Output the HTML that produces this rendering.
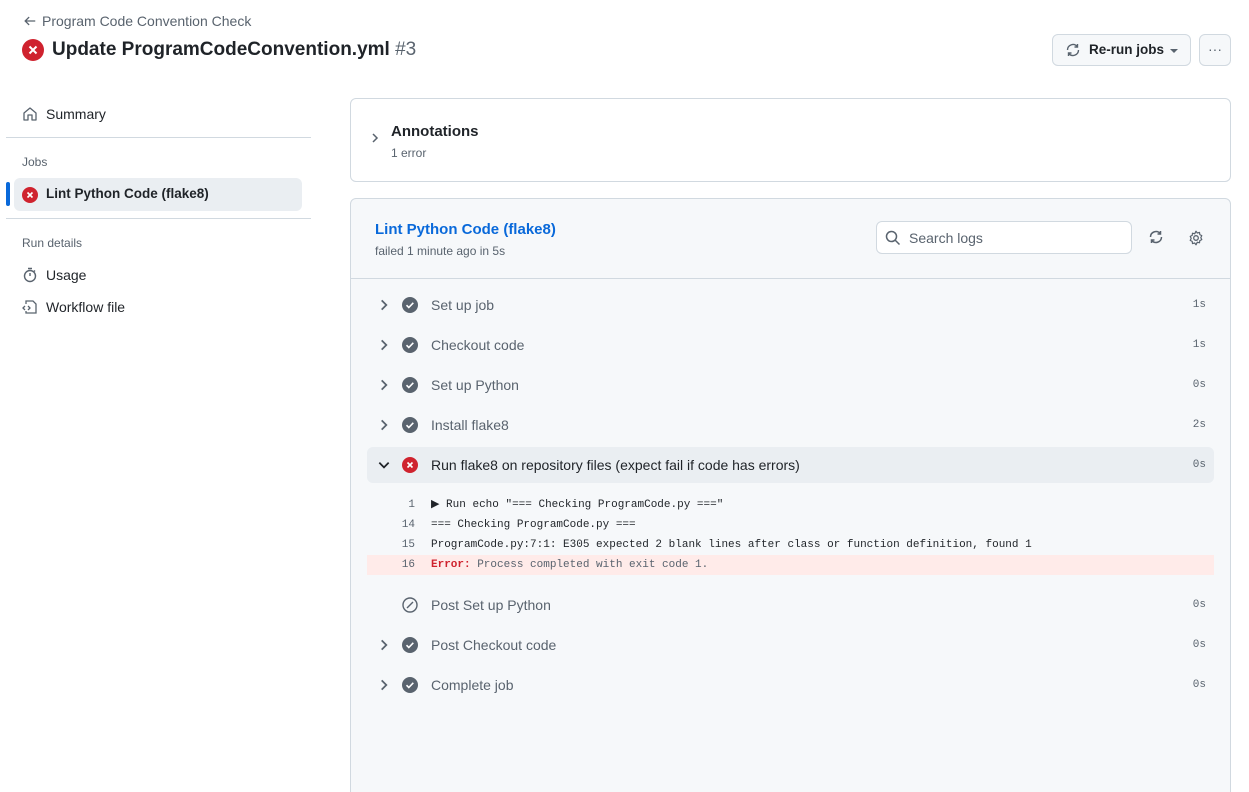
<!DOCTYPE html>
<html><head><meta charset="utf-8"><style>
*{box-sizing:border-box;margin:0;padding:0}
html,body{width:1249px;height:792px;overflow:hidden}
body{background:#fff;font-family:"Liberation Sans",sans-serif;color:#1f2328;position:relative}
.a{position:absolute}
.t{font-size:14px}
.row{position:absolute;left:367px;width:847px;height:36px}
.row .chev{position:absolute;left:10px;top:11px}
.row .ic{position:absolute;left:35px;top:10px}
.row .lbl{position:absolute;left:64px;top:10px;font-size:14px;color:#59636e}
.row .tm{position:absolute;right:8px;top:12px;font-family:"Liberation Mono",monospace;font-size:11px;color:#59636e}
.ln{position:absolute;left:367px;width:847px;height:20px;font-family:"Liberation Mono",monospace;font-size:11px;line-height:20px;color:#1f2328}
.ln .n{position:absolute;left:0;width:48px;text-align:right;color:#59636e}
.ln .c{position:absolute;left:64px;white-space:pre}
</style></head><body>
<svg class="a" style="left:23px;top:14px" width="14" height="14" viewBox="0 0 16 16"><path d="M14 8H3M7 3.5L2.5 8 7 12.5" fill="none" stroke="#59636e" stroke-width="1.5"/></svg>
<div class="a" style="left:42px;top:13px;font-size:14px;color:#59636e">Program Code Convention Check</div>
<svg class="a" style="left:22px;top:39px" width="22" height="22" viewBox="0 0 22 22"><circle cx="11" cy="11" r="11" fill="#cf222e"/><path d="M7.5 7.5l7 7M14.5 7.5l-7 7" stroke="#fff" stroke-width="2"/></svg>
<div class="a" style="left:52px;top:39px;font-size:19px;font-weight:bold;color:#1f2328">Update ProgramCodeConvention.yml <span style="font-weight:normal;color:#59636e">#3</span></div>
<div class="a" style="left:1052px;top:34px;width:139px;height:32px;border:1px solid #d1d9e0;border-radius:6px;background:#f6f8fa"></div>
<svg class="a" style="left:1065px;top:42px" width="16" height="16" viewBox="0 0 16 16"><path d="M2.5 8a5.5 5.5 0 0 1 9.7-3.5M13.5 8a5.5 5.5 0 0 1-9.7 3.5M12.5 2v3h-3M3.5 14v-3h3" fill="none" stroke="#59636e" stroke-width="1.4"/></svg>
<div class="a" style="left:1089px;top:42px;font-size:13.5px;font-weight:bold">Re-run jobs</div>
<div class="a" style="left:1170px;top:49px;border:4px solid transparent;border-top-color:#59636e;border-bottom:0"></div>
<div class="a" style="left:1199px;top:34px;width:32px;height:32px;border:1px solid #d1d9e0;border-radius:6px;background:#f6f8fa;text-align:center;line-height:28px;color:#59636e;font-size:14px">···</div>

<svg class="a" style="left:22px;top:106px" width="16" height="16" viewBox="0 0 16 16"><path d="M2 7L8 2l6 5v7H10V9H6v5H2z" fill="none" stroke="#59636e" stroke-width="1.3" stroke-linejoin="round"/></svg>
<div class="a t" style="left:46px;top:106px">Summary</div>
<div class="a" style="left:6px;top:137px;width:305px;height:1px;background:#d1d9e0"></div>
<div class="a" style="left:22px;top:155px;font-size:12px;color:#59636e">Jobs</div>
<div class="a" style="left:6px;top:182px;width:4px;height:24px;border-radius:2px;background:#0969da"></div>
<div class="a" style="left:14px;top:178px;width:288px;height:33px;border-radius:6px;background:#eaeef2"></div>
<svg class="a" style="left:22px;top:187px" width="16" height="16" viewBox="0 0 16 16"><circle cx="8" cy="8" r="8" fill="#cf222e"/><path d="M5.5 5.5l5 5M10.5 5.5l-5 5" stroke="#fff" stroke-width="1.6"/></svg>
<div class="a" style="left:46px;top:186px;font-size:13.5px;font-weight:bold">Lint Python Code (flake8)</div>
<div class="a" style="left:6px;top:218px;width:305px;height:1px;background:#d1d9e0"></div>
<div class="a" style="left:22px;top:236px;font-size:12px;color:#59636e">Run details</div>
<svg class="a" style="left:22px;top:267px" width="16" height="16" viewBox="0 0 16 16"><circle cx="8" cy="9" r="5.5" fill="none" stroke="#59636e" stroke-width="1.4"/><path d="M6 1.5h4M8 9V6M12 3.5l1 1" stroke="#59636e" stroke-width="1.4"/></svg>
<div class="a t" style="left:46px;top:267px">Usage</div>
<svg class="a" style="left:22px;top:299px" width="16" height="16" viewBox="0 0 16 16"><path d="M4 5V2h7l3 3v9H4v-2M3 7L1 9l2 2M6 7l2 2-2 2" fill="none" stroke="#59636e" stroke-width="1.3"/></svg>
<div class="a t" style="left:46px;top:299px">Workflow file</div>

<div class="a" style="left:350px;top:98px;width:881px;height:84px;border:1px solid #d1d9e0;border-radius:6px"></div>
<svg class="a" style="left:369px;top:132px" width="12" height="12" viewBox="0 0 12 12"><path d="M4 2l4 4-4 4" fill="none" stroke="#59636e" stroke-width="1.5"/></svg>
<div class="a" style="left:391px;top:123px;font-size:15px;font-weight:bold">Annotations</div>
<div class="a" style="left:391px;top:146px;font-size:12px;color:#59636e">1 error</div>

<div class="a" style="left:350px;top:198px;width:881px;height:620px;border:1px solid #d1d9e0;border-radius:6px;background:#f6f8fa"></div>
<div class="a" style="left:351px;top:278px;width:879px;height:1px;background:#d1d9e0"></div>
<div class="a" style="left:375px;top:221px;font-size:15px;font-weight:bold;color:#0969da">Lint Python Code (flake8)</div>
<div class="a" style="left:375px;top:244px;font-size:12px;color:#59636e">failed 1 minute ago in 5s</div>
<div class="a" style="left:876px;top:221px;width:256px;height:33px;border:1px solid #d1d9e0;border-radius:6px;background:#fff"></div>
<svg class="a" style="left:885px;top:230px" width="16" height="16" viewBox="0 0 16 16"><circle cx="6.5" cy="6.5" r="5" fill="none" stroke="#59636e" stroke-width="1.5"/><path d="M10 10l4.5 4.5" stroke="#59636e" stroke-width="1.5"/></svg>
<div class="a t" style="left:909px;top:230px;color:#59636e">Search logs</div>
<svg class="a" style="left:1148px;top:229px" width="16" height="16" viewBox="0 0 16 16"><path d="M2.5 8a5.5 5.5 0 0 1 9.7-3.5M13.5 8a5.5 5.5 0 0 1-9.7 3.5M12.5 2v3h-3M3.5 14v-3h3" fill="none" stroke="#59636e" stroke-width="1.5"/></svg>
<svg class="a" style="left:1188px;top:230px" width="16" height="16" viewBox="0 0 16 16"><circle cx="8" cy="8" r="2.3" fill="none" stroke="#59636e" stroke-width="1.3"/><path d="M8 1.2l1.3 1.8 2.2-.6.3 2.2 2 1-1 2 1 2-2 1-.3 2.2-2.2-.6L8 14.8l-1.3-1.8-2.2.6-.3-2.2-2-1 1-2-1-2 2-1 .3-2.2 2.2.6z" fill="none" stroke="#59636e" stroke-width="1.2" stroke-linejoin="round"/></svg>

<div class="row" style="top:287px"><svg class="chev" width="14" height="14" viewBox="0 0 12 12"><path d="M4 2l4 4-4 4" fill="none" stroke="#59636e" stroke-width="1.5"/></svg><svg class="ic" width="16" height="16" viewBox="0 0 16 16"><circle cx="8" cy="8" r="8" fill="#59636e"/><path d="M4.5 8.2l2.3 2.3 4.5-4.7" fill="none" stroke="#fff" stroke-width="1.6"/></svg><div class="lbl">Set up job</div><div class="tm">1s</div></div>
<div class="row" style="top:327px"><svg class="chev" width="14" height="14" viewBox="0 0 12 12"><path d="M4 2l4 4-4 4" fill="none" stroke="#59636e" stroke-width="1.5"/></svg><svg class="ic" width="16" height="16" viewBox="0 0 16 16"><circle cx="8" cy="8" r="8" fill="#59636e"/><path d="M4.5 8.2l2.3 2.3 4.5-4.7" fill="none" stroke="#fff" stroke-width="1.6"/></svg><div class="lbl">Checkout code</div><div class="tm">1s</div></div>
<div class="row" style="top:367px"><svg class="chev" width="14" height="14" viewBox="0 0 12 12"><path d="M4 2l4 4-4 4" fill="none" stroke="#59636e" stroke-width="1.5"/></svg><svg class="ic" width="16" height="16" viewBox="0 0 16 16"><circle cx="8" cy="8" r="8" fill="#59636e"/><path d="M4.5 8.2l2.3 2.3 4.5-4.7" fill="none" stroke="#fff" stroke-width="1.6"/></svg><div class="lbl">Set up Python</div><div class="tm">0s</div></div>
<div class="row" style="top:407px"><svg class="chev" width="14" height="14" viewBox="0 0 12 12"><path d="M4 2l4 4-4 4" fill="none" stroke="#59636e" stroke-width="1.5"/></svg><svg class="ic" width="16" height="16" viewBox="0 0 16 16"><circle cx="8" cy="8" r="8" fill="#59636e"/><path d="M4.5 8.2l2.3 2.3 4.5-4.7" fill="none" stroke="#fff" stroke-width="1.6"/></svg><div class="lbl">Install flake8</div><div class="tm">2s</div></div>
<div class="row" style="top:447px;background:#eaeef2;border-radius:6px"><svg class="chev" width="14" height="14" viewBox="0 0 12 12"><path d="M2 4l4 4 4-4" fill="none" stroke="#1f2328" stroke-width="1.5"/></svg><svg class="ic" width="16" height="16" viewBox="0 0 16 16"><circle cx="8" cy="8" r="8" fill="#cf222e"/><path d="M5.5 5.5l5 5M10.5 5.5l-5 5" stroke="#fff" stroke-width="1.6"/></svg><div class="lbl" style="color:#1f2328">Run flake8 on repository files (expect fail if code has errors)</div><div class="tm">0s</div></div>

<div class="ln" style="top:495px"><span class="n">1</span><span class="c">▶ Run echo "=== Checking ProgramCode.py ==="</span></div>
<div class="ln" style="top:515px"><span class="n">14</span><span class="c">=== Checking ProgramCode.py ===</span></div>
<div class="ln" style="top:535px"><span class="n">15</span><span class="c">ProgramCode.py:7:1: E305 expected 2 blank lines after class or function definition, found 1</span></div>
<div class="ln" style="top:555px;background:#ffebe9"><span class="n">16</span><span class="c" style="color:#59636e"><b style="color:#cf222e">Error:</b> Process completed with exit code 1.</span></div>

<div class="row" style="top:587px"><svg class="ic" width="16" height="16" viewBox="0 0 16 16"><circle cx="8" cy="8" r="7" fill="none" stroke="#59636e" stroke-width="1.4"/><path d="M5 11l6-6" stroke="#59636e" stroke-width="1.4"/></svg><div class="lbl">Post Set up Python</div><div class="tm">0s</div></div>
<div class="row" style="top:627px"><svg class="chev" width="14" height="14" viewBox="0 0 12 12"><path d="M4 2l4 4-4 4" fill="none" stroke="#59636e" stroke-width="1.5"/></svg><svg class="ic" width="16" height="16" viewBox="0 0 16 16"><circle cx="8" cy="8" r="8" fill="#59636e"/><path d="M4.5 8.2l2.3 2.3 4.5-4.7" fill="none" stroke="#fff" stroke-width="1.6"/></svg><div class="lbl">Post Checkout code</div><div class="tm">0s</div></div>
<div class="row" style="top:667px"><svg class="chev" width="14" height="14" viewBox="0 0 12 12"><path d="M4 2l4 4-4 4" fill="none" stroke="#59636e" stroke-width="1.5"/></svg><svg class="ic" width="16" height="16" viewBox="0 0 16 16"><circle cx="8" cy="8" r="8" fill="#59636e"/><path d="M4.5 8.2l2.3 2.3 4.5-4.7" fill="none" stroke="#fff" stroke-width="1.6"/></svg><div class="lbl">Complete job</div><div class="tm">0s</div></div>
</body></html>
